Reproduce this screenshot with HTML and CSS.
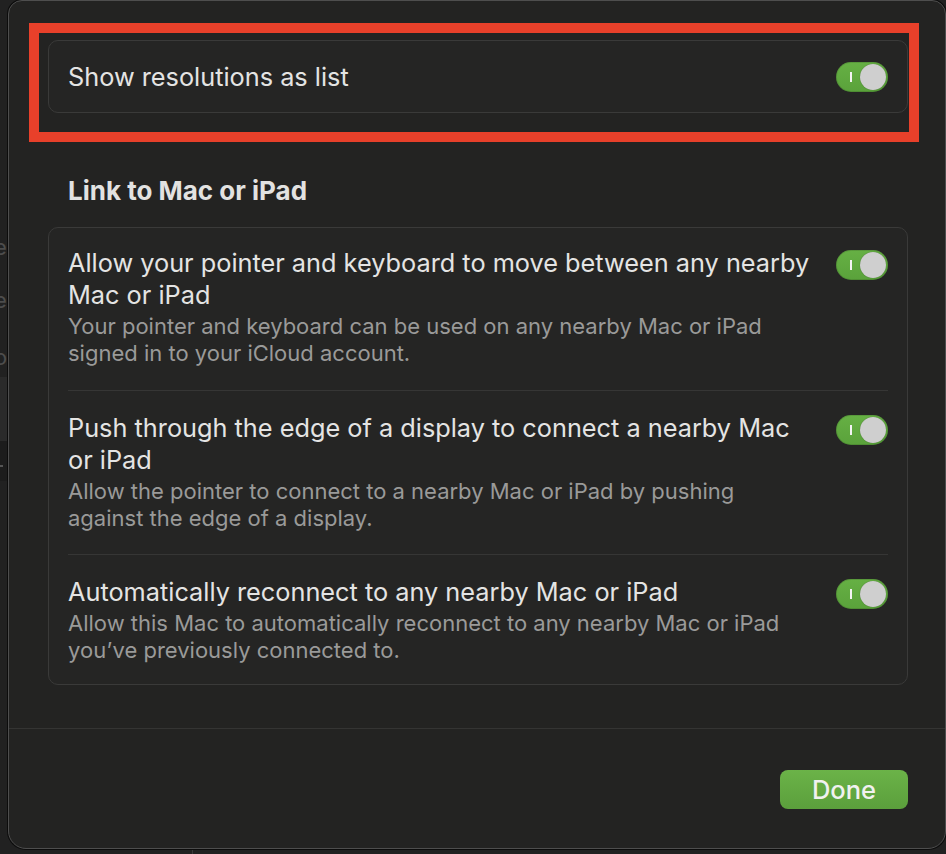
FILE: index.html
```html
<!DOCTYPE html>
<html lang="en">
<head>
<meta charset="utf-8">
<title>Display settings</title>
<link rel="stylesheet" href="styles.css">
</head>
<body>
<div class="desktop">
  <div class="backdrop">
    <div class="behind-window">
      <span class="ghost g1">e</span>
      <span class="ghost g2">e</span>
      <span class="ghost g3">o</span>
      <div class="ghost-block"></div>
      <div class="ghost-dark"></div>
      <div class="ghost-mark"></div>
    </div>
    <div class="ghost-bottom"></div>
  </div>

  <div class="sheet">
    <div class="content">
      <div class="highlight">
        <div class="card single">
          <span class="title">Show resolutions as list</span>
          <span class="toggle"><span class="toggle-mark"></span><span class="knob"></span></span>
        </div>
      </div>

      <h2 class="section-title">Link to Mac or iPad</h2>

      <div class="card list">
        <div class="row first">
          <div class="row-text">
            <div class="title">Allow your pointer and keyboard to move between any nearby Mac or iPad</div>
            <div class="sub">Your pointer and keyboard can be used on any nearby Mac or iPad signed in to your iCloud account.</div>
          </div>
          <span class="toggle"><span class="toggle-mark"></span><span class="knob"></span></span>
        </div>
        <div class="row">
          <div class="row-text">
            <div class="title">Push through the edge of a display to connect a nearby Mac or iPad</div>
            <div class="sub">Allow the pointer to connect to a nearby Mac or iPad by pushing against the edge of a display.</div>
          </div>
          <span class="toggle"><span class="toggle-mark"></span><span class="knob"></span></span>
        </div>
        <div class="row last">
          <div class="row-text">
            <div class="title">Automatically reconnect to any nearby Mac or iPad</div>
            <div class="sub">Allow this Mac to automatically reconnect to any nearby Mac or iPad you’ve previously connected to.</div>
          </div>
          <span class="toggle"><span class="toggle-mark"></span><span class="knob"></span></span>
        </div>
      </div>
    </div>

    <div class="footer">
      <button class="done">Done</button>
    </div>
  </div>
</div>
</body>
</html>
```

FILE: styles.css
```css
* { box-sizing: border-box; }

html, body {
  margin: 0;
  padding: 0;
  background: #1f1f1f;
}

body {
  font-family: "Inter", "Liberation Sans", sans-serif;
  -webkit-font-smoothing: antialiased;
}

.desktop {
  position: relative;
  width: 946px;
  height: 854px;
  overflow: hidden;
  background: #212121;
}

/* window behind the sheet, only a sliver visible */
.backdrop {
  position: absolute;
  inset: 0;
}
.behind-window {
  position: absolute;
  left: 0;
  top: 0;
  width: 8px;
  height: 849px;
  overflow: hidden;
  background: #212121;
}
.ghost {
  position: absolute;
  left: -6px;
  font-size: 22px;
  line-height: 22px;
  color: #4d4d4d;
}
.g1 { top: 236px; }
.g2 { top: 289px; }
.g3 { top: 346px; }
.ghost-block {
  position: absolute;
  left: 0; top: 377px;
  width: 8px; height: 64px;
  background: #2a2a2a;
}
.ghost-dark {
  position: absolute;
  left: 0; top: 441px;
  width: 8px; height: 40px;
  background: #1c1c1c;
}
.ghost-mark {
  position: absolute;
  left: 0; top: 465px;
  width: 3px; height: 2px;
  background: #555;
}
.ghost-bottom {
  position: absolute;
  left: 192px; top: 849px;
  width: 1px; height: 5px;
  background: #3a3a3a;
}

/* the sheet window */
.sheet {
  position: absolute;
  left: 8px;
  top: 0;
  width: 938px;
  display: flex;
  flex-direction: column;
  background: #232322;
  border: 1px solid #4e4e4e;
  border-radius: 14px 14px 18px 18px;
  box-shadow: 0 0 0 1px #0c0c0c;
}

.content {
  padding: 22px 37px 43px 20px;
  display: flex;
  flex-direction: column;
  border-bottom: 1px solid #343433;
}

.highlight {
  border: 10px solid #e8402a;
  padding: 7px 0 19px 9px;
  margin-right: -11px;
}

.card {
  background: #252524;
  border: 1px solid #3a3a39;
  border-radius: 10px;
}

.card.single {
  height: 73px;
  width: 860px;
  padding: 0 19px;
  display: flex;
  align-items: center;
  justify-content: space-between;
}

.card.list {
  margin-left: 19px;
  width: 860px;
  padding: 0 19px;
}

.title {
  font-size: 25.3px;
  line-height: 32px;
  color: #e4e4e3;
}

.sub {
  margin-top: 2px;
  font-size: 22px;
  line-height: 27px;
  color: #9a9a99;
}

.section-title {
  margin: 33px 0 20px 39px;
  font-size: 26px;
  line-height: 32px;
  font-weight: 700;
  color: #e2e2e1;
}

.row {
  display: flex;
  justify-content: space-between;
  align-items: flex-start;
  gap: 24px;
  padding: 21px 0 22px;
  border-bottom: 1px solid #363635;
}
.row.first { padding-top: 19px; padding-bottom: 23px; }
.row.last { border-bottom: none; padding-bottom: 20px; }
.row-text { flex: 1; }
.row .toggle { margin-top: 3px; }

.toggle {
  position: relative;
  flex: none;
  width: 52px;
  height: 30px;
  border-radius: 15px;
  background: linear-gradient(#66b044, #5aa23b);
  box-shadow: inset 0 0 0 1px rgba(0,0,0,0.12);
}
.toggle-mark {
  position: absolute;
  left: 14px;
  top: 10px;
  width: 2px;
  height: 10px;
  background: #f4f4f4;
}
.knob {
  position: absolute;
  right: 2px;
  top: 2px;
  width: 26px;
  height: 26px;
  border-radius: 50%;
  background: #cfcfcf;
  box-shadow: 0 0 1px rgba(0,0,0,0.4);
}

.footer {
  display: flex;
  justify-content: flex-end;
  padding: 41px 37px 39px 0;
}

.done {
  width: 128px;
  height: 39px;
  border: none;
  border-radius: 8px;
  background: linear-gradient(#6bb348, #5b9f3c);
  color: #f1f1f0;
  font-family: inherit;
  font-size: 25.5px;
  font-weight: 500;
  padding: 0;
}
```
